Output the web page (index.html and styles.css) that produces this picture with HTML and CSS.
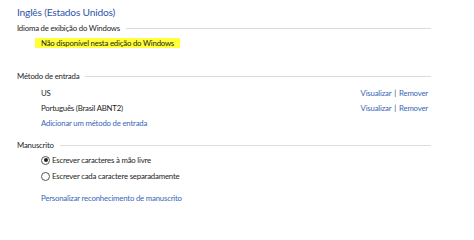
FILE: index.html
```html
<!DOCTYPE html>
<html>
<head>
<meta charset="utf-8">
<link rel="stylesheet" href="styles.css">
</head>
<body>
<div class="page">
  <div class="title">Inglês (Estados Unidos)</div>
  <div class="section-head head-first"><span>Idioma de exibição do Windows</span><div class="rule"></div></div>
  <div class="indent"><span class="highlight">Não disponível nesta edição do Windows</span></div>

  <div class="section-head head-method"><span>Método de entrada</span><div class="rule"></div></div>
  <div class="rows">
    <div class="row indent"><span>US</span><span class="actions"><a>Visualizar</a><span class="sep">|</span><a>Remover</a></span></div>
    <div class="row indent"><span>Português (Brasil ABNT2)</span><span class="actions"><a>Visualizar</a><span class="sep">|</span><a>Remover</a></span></div>
    <div class="row indent"><a>Adicionar um método de entrada</a></div>
  </div>

  <div class="section-head head-hand"><span>Manuscrito</span><div class="rule"></div></div>
  <div class="radios">
    <div class="radio-row indent"><span class="radio checked"></span><span>Escrever caracteres à mão livre</span></div>
    <div class="radio-row indent"><span class="radio"></span><span>Escrever cada caractere separadamente</span></div>
  </div>
  <div class="row indent link-last"><a>Personalizar reconhecimento de manuscrito</a></div>
</div>
</body>
</html>
```
FILE: styles.css
```css
html, body { margin: 0; padding: 0; background: #fff; }
body { font-family: Lato, "Open Sans", sans-serif; font-size: 7.8px; letter-spacing: -0.2px; color: #1e1e1e; }
.page { padding: 4px 43px 0 17px; }
.title { font-size: 10.2px; letter-spacing: -0.2px; color: #3056a8; line-height: 16px; }
.section-head { display: flex; align-items: center; gap: 6px; line-height: 12px; }
.section-head .rule { flex: 1; height: 1px; background: #dcdcdc; }
.head-first { margin-top: 2px; }
.head-method { margin-top: 22px; }
.head-hand { margin-top: 8px; }
.indent { padding-left: 24px; }
.highlight { display: block; width: fit-content; background: #ffff3a; padding: 0 6px; margin-left: -6px; line-height: 10px; margin-top: 4px; }
.rows { margin-top: 4px; }
.row { display: flex; justify-content: space-between; line-height: 15px; }
a { color: #3a66b8; }
.actions { display: flex; gap: 3px; padding-right: 3px; }
.sep { color: #444; }
.radios { margin-top: 1px; }
.radio-row { display: flex; align-items: center; gap: 2px; line-height: 16px; }
.radio { width: 9px; height: 9px; border: 1px solid #555; border-radius: 50%; box-sizing: border-box; position: relative; }
.radio.checked::after { content: ""; position: absolute; left: 1.5px; top: 1.5px; width: 4px; height: 4px; border-radius: 50%; background: #222; }
.link-last { margin-top: 7px; }
```
